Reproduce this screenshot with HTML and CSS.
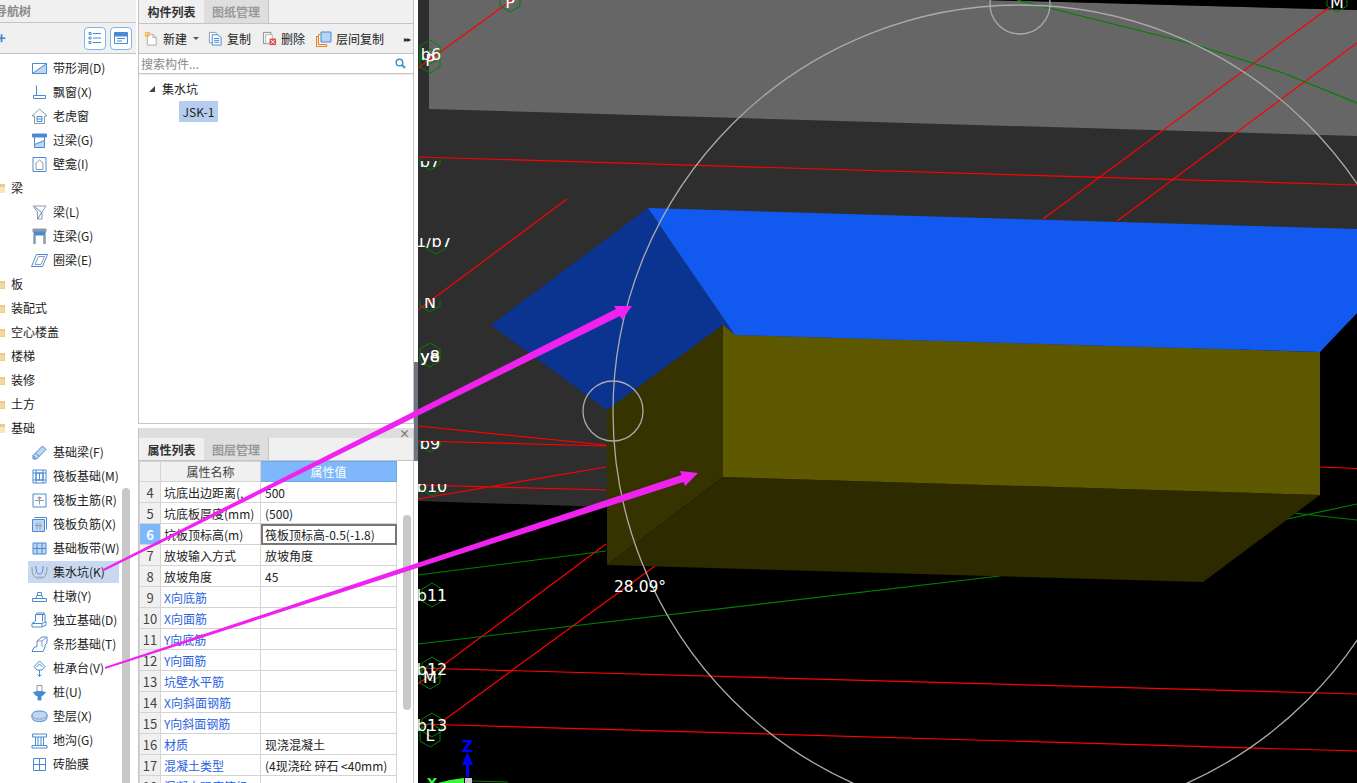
FILE: index.html
```html
<!DOCTYPE html>
<html lang="zh-CN">
<head>
<meta charset="utf-8">
<title>集水坑</title>
<link rel="stylesheet" href="styles.css">
</head>
<body>
<svg class="defs" width="0" height="0" aria-hidden="true">
  <symbol id="closed" viewBox="0 0 12 12"><path d="M0 2h5l1 1h6v8H0z" fill="#eecb85"/><path d="M1 5h10v5H1z" fill="#f3d89f"/></symbol>
  <symbol id="open" viewBox="0 0 12 12"><path d="M0 1h5l1 1h6v9H0z" fill="#eecb85"/><path d="M3 11l1-6h8v6z" fill="#f8e6bd"/></symbol>
</svg>

<aside class="nav">
  <div class="nav-title"><span class="nav-title-text">导航树</span></div>
  <div class="nav-tools">
    <span class="plus">+</span>
    <span class="tool-btn"><svg class="ic" viewBox="0 0 16 16"><path d="M2 2.500h2v2H2zM2 7h2v2H2zM2 11.500h2v2H2zM6 3.500h8M6 8h8M6 12.500h8"/></svg></span>
    <span class="tool-btn"><svg class="ic" viewBox="0 0 16 16"><path d="M1.500 2.500h13v11h-13z"/><path d="M1.500 3h13v3h-13z" class="solid"/><path d="M4 8.500h8M4 11h5"/></svg></span>
  </div>
  <div class="tree">
    <div class="leaf"><svg class="ic" viewBox="0 0 17 17"><path d="M1.500 3.500h14v10h-14z"/><path d="M1.500 13.500l14-10v10z" class="soft"/></svg><span>带形洞(D)</span></div>
    <div class="leaf"><svg class="ic" viewBox="0 0 17 17"><path d="M5.500 1.500v10h7M2.500 11.500h12v3h-12z"/></svg><span>飘窗(X)</span></div>
    <div class="leaf"><svg class="ic" viewBox="0 0 17 17"><path d="M8.500 1L1 8h2.500v7.500h10V8H16z" class="grey"/><path d="M6 8.500h5v5H6zM6 11h5"/></svg><span>老虎窗</span></div>
    <div class="leaf"><svg class="ic" viewBox="0 0 17 17"><path d="M1.500 2h14v3h-14z" class="solid"/><path d="M3.500 5v10.500h10V5"/><path d="M3.500 15.500v-3l10-4v7z" class="soft"/></svg><span>过梁(G)</span></div>
    <div class="leaf"><svg class="ic" viewBox="0 0 17 17"><path d="M2 1.500h13v14H2z"/><path d="M5 13.500V7l3.500-3L12 7v6.500z" class="grey"/></svg><span>壁龛(I)</span></div>
    <div class="branch"><svg class="fd"><use href="#open"/></svg><span>梁</span></div>
    <div class="leaf"><svg class="ic" viewBox="0 0 17 17"><path d="M2 2h13l-4 6v7H6.500V8z" class="grey"/><path d="M6.500 15l4.500-7M4 3l6 5"/></svg><span>梁(L)</span></div>
    <div class="leaf"><svg class="ic" viewBox="0 0 17 17"><path d="M2 1h13v3H2z" class="grey-solid"/><path d="M3 4h11v3H3z" class="solid"/><path d="M3.500 7v9M13.500 7v9" class="thick"/></svg><span>连梁(G)</span></div>
    <div class="leaf"><svg class="ic" viewBox="0 0 17 17"><path d="M5.500 2.500h11l-5 12H.5z"/><path d="M7.500 4.500h6l-3.500 8H4z" class="grey"/></svg><span>圈梁(E)</span></div>
    <div class="branch"><svg class="fd"><use href="#closed"/></svg><span>板</span></div>
    <div class="branch"><svg class="fd"><use href="#closed"/></svg><span>装配式</span></div>
    <div class="branch"><svg class="fd"><use href="#closed"/></svg><span>空心楼盖</span></div>
    <div class="branch"><svg class="fd"><use href="#closed"/></svg><span>楼梯</span></div>
    <div class="branch"><svg class="fd"><use href="#closed"/></svg><span>装修</span></div>
    <div class="branch"><svg class="fd"><use href="#closed"/></svg><span>土方</span></div>
    <div class="branch"><svg class="fd"><use href="#open"/></svg><span>基础</span></div>
    <div class="leaf"><svg class="ic" viewBox="0 0 17 17"><path d="M2 11.500L11.500 2l3.500 3.500L5.500 15H2z" class="soft"/><path d="M2 11.500L5.500 15M4.500 9l3.500 3.500"/></svg><span>基础梁(F)</span></div>
    <div class="leaf"><svg class="ic" viewBox="0 0 17 17"><path d="M2 2h13v13H2zM5 5h7v7H5zM2 5h13M2 12h13M5 2v13M12 2v13M8.500 5v7"/></svg><span>筏板基础(M)</span></div>
    <div class="leaf"><svg class="ic" viewBox="0 0 17 17"><path d="M2 2h13v13H2z"/><path d="M4 8.500h9M8.500 4.500v8M7 7V5.500h3V7" class="grey"/></svg><span>筏板主筋(R)</span></div>
    <div class="leaf"><svg class="ic" viewBox="0 0 17 17"><path d="M1.500 3.500h12v12h-12z" class="soft"/><path d="M3.500 1.500h12v12"/><path d="M4 9.500h7M6 6.500v7M9 6.500v7" class="grey"/></svg><span>筏板负筋(X)</span></div>
    <div class="leaf"><svg class="ic" viewBox="0 0 17 17"><path d="M2 3h13v11H2z" class="soft"/><path d="M6 3v11M11 3v11M2 8.500h13"/></svg><span>基础板带(W)</span></div>
    <div class="leaf sel"><svg class="ic" viewBox="0 0 17 17"><path d="M1 3c0 9 2 11 7.500 11S16 12 16 3" class="grey"/><path d="M5 2c0 6 1 8 3.500 8S12 8 12 2M4 9l.6.600M7 12l.6.600M10 12l.6.600M13 9l.6.600"/></svg><span>集水坑(K)</span></div>
    <div class="leaf"><svg class="ic" viewBox="0 0 17 17"><path d="M1.500 10.500h14v3h-14zM5 10.500l1-3h5l1 3M6.500 7.500v-3h4v3"/></svg><span>柱墩(Y)</span></div>
    <div class="leaf"><svg class="ic" viewBox="0 0 17 17"><path d="M1 11.500h10l4-2v3.500l-4 2H1zM1 11.500l3-2M11 11.500v3.500M4.500 9.500V2.500h7l2.500 0v7"/><path d="M4.500 2.500l2-1.500h7l-2 1.500v7"/></svg><span>独立基础(D)</span></div>
    <div class="leaf"><svg class="ic" viewBox="0 0 17 17"><path d="M1 15.500l2-4 3-1V5l5-4h5v6l-2 2v2l-2 4.500z"/><path d="M6 5h5l5-4M11 5v6" class="grey"/></svg><span>条形基础(T)</span></div>
    <div class="leaf"><svg class="ic" viewBox="0 0 17 17"><path d="M8.500 1L3 6.500l3 3.500h5l3-3.500z"/><path d="M8.500 4l-3 3M8.500 4l3 3M8.500 10v6.500M6.500 14.500l2 2 2-2"/></svg><span>桩承台(V)</span></div>
    <div class="leaf"><svg class="ic" viewBox="0 0 17 17"><path d="M6 1.500h5v6H6z" class="grey"/><path d="M2.500 8.500l4-1h4l4 1-3 3h-1.500v4.500h-3v-4.500H5z" class="solid"/></svg><span>桩(U)</span></div>
    <div class="leaf"><svg class="ic" viewBox="0 0 17 17"><path d="M1 7c0-2.500 3-4 7.500-4S16 4.500 16 7v2.500c0 2.500-3 4-7.500 4S1 12 1 9.500z" class="soft"/><path d="M1 7c0 2.500 3 4 7.500 4S16 9.500 16 7" class="grey"/></svg><span>垫层(X)</span></div>
    <div class="leaf"><svg class="ic" viewBox="0 0 17 17"><path d="M1.500 2h14v3h-14zM4.500 5v8M12.500 5v8M1 13.500h15v2.500H1zM7 5v8M10 5v8"/></svg><span>地沟(G)</span></div>
    <div class="leaf"><svg class="ic" viewBox="0 0 17 17"><path d="M2.500 2.500h12v12h-12zM8.500 2.500v12M2.500 8.500h12"/></svg><span>砖胎膜</span></div>
    <div class="branch"><svg class="fd"><use href="#closed"/></svg><span></span></div>
  </div>
  <div class="nav-scroll"></div>
</aside>

<main class="mid">
  <section class="list-panel">
    <div class="tabs">
      <span class="tab on">构件列表</span><span class="tab">图纸管理</span>
    </div>
    <div class="toolbar">
      <span class="tb-item tb-new"><svg class="tb-ic" viewBox="0 0 16 16"><path d="M3.500 3.500h6l3.500 3.500v8H3.500z" fill="#fff" stroke="#a8a8a8"/><path d="M9.500 3.500V7H13" fill="none" stroke="#a8a8a8"/><path d="M1 1h5v5H1z" fill="#f6a94a"/><path d="M3 1v5M1 3h5" stroke="#fbe08a"/></svg><span>新建</span><i class="caret"></i></span>
      <span class="tb-item tb-copy"><svg class="tb-ic" viewBox="0 0 16 16"><path d="M1.500 1.500h7l1 1v10h-8z" fill="#fff" stroke="#8a97a8"/><path d="M4.500 4h6l3.500 3v8h-9.500z" fill="#fff" stroke="#3d86d0"/><path d="M6.500 8h5.500M6.500 10h5.500M6.500 12h5.500" stroke="#3d86d0"/></svg><span>复制</span></span>
      <span class="tb-item tb-del"><svg class="tb-ic" viewBox="0 0 16 16"><path d="M1.500 1.500h8v12h-8z" fill="none" stroke="#8b8b8b"/><path d="M4 4h7v9H4z" fill="#fff" stroke="#b5b5b5"/><path d="M8 8h7v7H8z" fill="#d9534f"/><path d="M9.500 9.500l4 4M13.500 9.500l-4 4" stroke="#fff"/></svg><span>删除</span></span>
      <span class="tb-item tb-layer"><svg class="tb-ic wide" viewBox="0 0 16 16"><path d="M.5 15.500v-10h2M.5 15.500h10v-2" fill="none" stroke="#e8832a" stroke-width="1.200"/><path d="M2.500 13.500v-10h2M2.500 13.500h8" fill="none" stroke="#e8832a"/><path d="M5 1h10v10H5z" fill="#b5d3f5" stroke="#4a8ad4"/></svg><span>层间复制</span></span>
      <span class="more">▸▸</span>
    </div>
    <div class="search">
      <span class="search-text">搜索构件...</span>
      <svg class="search-ic" viewBox="0 0 11 11"><circle cx="4.500" cy="4.500" r="3.300" fill="none" stroke="#3d94d0" stroke-width="1.500"/><path d="M7 7l3 3" stroke="#3d94d0" stroke-width="2"/></svg>
    </div>
    <div class="comp-tree">
      <div class="comp-root"><i class="expander"></i><span>集水坑</span></div>
      <div class="comp-child"><span class="comp-sel">JSK-1</span></div>
    </div>
  </section>

  <section class="prop-panel">
    <div class="prop-strip"><span class="close">×</span></div>
    <div class="tabs">
      <span class="tab on">属性列表</span><span class="tab">图层管理</span>
    </div>
    <div class="prop-body">
      <table class="props">
        <colgroup><col class="c-no"><col class="c-name"><col class="c-val"></colgroup>
        <thead><tr><th class="no"></th><th>属性名称</th><th class="val-head">属性值</th></tr></thead>
        <tbody>
          <tr><td class="no">4</td><td>坑底出边距离(,</td><td>500</td></tr>
          <tr><td class="no">5</td><td>坑底板厚度(mm)</td><td>(500)</td></tr>
          <tr><td class="no cur">6</td><td>坑板顶标高(m)</td><td class="focus">筏板顶标高-0.5(-1.8)</td></tr>
          <tr><td class="no">7</td><td>放坡输入方式</td><td>放坡角度</td></tr>
          <tr><td class="no">8</td><td>放坡角度</td><td>45</td></tr>
          <tr><td class="no">9</td><td class="link">X向底筋</td><td></td></tr>
          <tr><td class="no">10</td><td class="link">X向面筋</td><td></td></tr>
          <tr><td class="no">11</td><td class="link">Y向底筋</td><td></td></tr>
          <tr><td class="no">12</td><td class="link">Y向面筋</td><td></td></tr>
          <tr><td class="no">13</td><td class="link">坑壁水平筋</td><td></td></tr>
          <tr><td class="no">14</td><td class="link">X向斜面钢筋</td><td></td></tr>
          <tr><td class="no">15</td><td class="link">Y向斜面钢筋</td><td></td></tr>
          <tr><td class="no">16</td><td class="link">材质</td><td>现浇混凝土</td></tr>
          <tr><td class="no">17</td><td class="link">混凝土类型</td><td>(4现浇砼 碎石 &lt;40mm)</td></tr>
          <tr><td class="no">18</td><td class="link">混凝土强度等级</td><td></td></tr>
        </tbody>
      </table>
      <div class="prop-track"><div class="prop-thumb"></div></div>
    </div>
  </section>
</main>

<div class="splitter"><div class="splitter-mark"></div></div>

<svg class="view" viewBox="418 0 939 783" aria-label="三维视图">
  <defs>
    <polygon id="hex" points="0,-12 10,-6 10,6 0,12 -10,6 -10,-6" fill="none" stroke="#008000"/>
    <polyline id="hexlow" points="-10,1 -10,6 0,12 10,6 10,1" fill="none" stroke="#008000"/>
    <clipPath id="c7"><rect x="418" y="161" width="40" height="20"/></clipPath>
    <clipPath id="c1b7"><rect x="418" y="238" width="50" height="20"/></clipPath>
    <clipPath id="cn"><rect x="418" y="298" width="40" height="20"/></clipPath>
    <clipPath id="c9"><rect x="418" y="441" width="40" height="20"/></clipPath>
    <clipPath id="c10"><rect x="418" y="484" width="50" height="20"/></clipPath>
  </defs>
  <rect x="418" y="0" width="939" height="783" fill="#000"/>
  <polygon points="418,0 1357,0 1357,320 606,507 418,501" fill="#2e2e2e"/>
  <polygon points="429,0 985,0 1357,10 1357,136 429,109" fill="#666"/>
  <polygon points="985,0 1357,10 1357,0" fill="#000"/>
  <polygon points="1320,352 1357,313 1357,620 1320,620" fill="#000"/>

  <g fill="none" stroke="#f00" stroke-width="1.200">
    <path d="M418 157L1357 185"/>
    <path d="M418 68L512 0"/>
    <path d="M418 310L567 199"/>
    <path d="M1043 219L1330 7"/>
    <path d="M1117 221L1357 43"/>
    <path d="M418 426L606 445M418 441L606 446M418 499L606 467M418 485L606 490"/>
    <path d="M418 684L606 544"/>
    <path d="M440 723L655 566"/>
    <path d="M418 668L1357 694"/>
    <path d="M418 724L1357 751"/>
    <path d="M1320 467L1357 468.500"/>
  </g>
  <g fill="none" stroke="#008000" stroke-width="1.200">
    <path d="M1017 0L1193 44L1283 73L1357 103"/>
    <path d="M418 575L606 551"/>
    <path d="M418 644L1000 576"/>
    <path d="M1287 519L1357 504M1293 513L1357 520"/>
    <path d="M472 781L508 782"/>
  </g>

  <polygon points="648,208 735,335 723,325 607,410 491,325" fill="#0b3390"/>
  <polygon points="607,410 723,325 723,477 607,565" fill="#373300"/>
  <polygon points="723,477 1320,495 1203,582 607,565" fill="#2e2a00"/>
  <polygon points="723,325 735,335 1320,352 1320,495 723,477" fill="#5e5900"/>
  <polygon points="648,208 1357,229 1357,313 1320,352 735,335" fill="#1259f0"/>

  <g fill="none" stroke="#ababab" stroke-width="1.300">
    <circle cx="1020" cy="412" r="407"/>
    <circle cx="1020" cy="4" r="30"/>
    <circle cx="613" cy="411" r="30"/>
  </g>

  <use href="#hex" x="510" y="0"/>
  <use href="#hex" x="430" y="52"/>
  <use href="#hex" x="430" y="61"/>
  <use href="#hexlow" x="430" y="158"/>
  <use href="#hexlow" x="436" y="242"/>
  <use href="#hexlow" x="430" y="300"/>
  <use href="#hex" x="430" y="355"/>
  <use href="#hexlow" x="430" y="440"/>
  <use href="#hexlow" x="432" y="484"/>
  <use href="#hex" x="432" y="595"/>
  <use href="#hex" x="432" y="669"/>
  <use href="#hex" x="430" y="677"/>
  <use href="#hex" x="432" y="725"/>
  <use href="#hex" x="430" y="735"/>
  <use href="#hex" x="1337" y="0"/>

  <g class="grid-labels">
    <text x="510" y="8" text-anchor="middle">P</text>
    <text x="431" y="60" text-anchor="middle">b6</text>
    <text x="430" y="66" text-anchor="middle">P</text>
    <text x="430" y="167" text-anchor="middle" clip-path="url(#c7)">b7</text>
    <text x="434" y="247" text-anchor="middle" clip-path="url(#c1b7)">1/b7</text>
    <text x="430" y="308" text-anchor="middle" clip-path="url(#cn)">N</text>
    <text x="430" y="362" text-anchor="middle">y8</text>
    <text x="430" y="362" text-anchor="middle">ye</text>
    <text x="430" y="449" text-anchor="middle" clip-path="url(#c9)">b9</text>
    <text x="432" y="492" text-anchor="middle" clip-path="url(#c10)">b10</text>
    <text x="432" y="601" text-anchor="middle">b11</text>
    <text x="432" y="675" text-anchor="middle">b12</text>
    <text x="430" y="683" text-anchor="middle">M</text>
    <text x="432" y="731" text-anchor="middle">b13</text>
    <text x="430" y="741" text-anchor="middle">L</text>
    <text x="1337" y="8" text-anchor="middle">M</text>
    <text x="614" y="592" class="angle">28.09°</text>
  </g>

  <path d="M467.500 777V756" stroke="#00f" stroke-width="3" fill="none"/>
  <polygon points="467.500,752 473,765 462,765" fill="#00f"/>
  <text x="467.500" y="752" class="axis-z" text-anchor="middle">Z</text>
  <polygon points="464,778 464,783 438,783 450,780" fill="#3f3"/>
  <rect x="465" y="778" width="7" height="5" fill="#ccc"/>
  <text x="432" y="787" class="axis-y" text-anchor="middle">Y</text>
</svg>

<svg class="arrows" viewBox="0 0 1357 783" aria-hidden="true">
  <polygon points="103,569 616,309 614,306 632,306 622,320 620,316 104,571" fill="#f022f0"/>
  <polygon points="105,667 681.500,475 680,471 698,473 685,486 683.500,482 105,669" fill="#f022f0"/>
</svg>
</body>
</html>
```
FILE: styles.css
```css
* { box-sizing: border-box; }
html, body { height: 100%; }
body {
  margin: 0;
  width: 1357px;
  height: 783px;
  overflow: hidden;
  display: flex;
  position: relative;
  background: #fff;
  color: #222;
  font: 12px/16px "Noto Sans CJK SC", "Noto Sans", sans-serif;
}
.defs { position: absolute; }

/* navigation tree */
.nav { width: 136px; flex: none; position: relative; overflow: hidden; height: 783px; }
.nav-title {
  height: 23px;
  background: #f0f0f0;
  border-bottom: 1px solid #c4c4c4;
  display: flex;
  align-items: center;
}
.nav-title-text { margin-left: -5px; color: #8a8a8a; font-weight: 700; white-space: nowrap; }
.nav-tools {
  height: 31px;
  background: #f0f0f0;
  border-bottom: 1px solid #c4c4c4;
  display: flex;
  align-items: center;
  padding-right: 4px;
  gap: 4px;
}
.plus { margin-left: -3px; margin-right: auto; color: #3d86d0; font-weight: 700; font-size: 15px; }
.tool-btn {
  width: 22px;
  height: 23px;
  border: 1px solid #7db4f2;
  border-radius: 4px;
  background: #fff;
  display: flex;
  align-items: center;
  justify-content: center;
}
.ic { width: 17px; height: 17px; flex: none; fill: none; stroke: #4a8ad4; stroke-width: 1; }
.tool-btn .ic { width: 16px; height: 16px; }
.ic .soft { fill: #bcd6f3; }
.ic .solid { fill: #4a8ad4; }
.ic .grey { stroke: #8d9aa8; }
.ic .grey-solid { fill: #8d9aa8; stroke: #8d9aa8; }
.ic .thick { stroke: #8d9aa8; stroke-width: 2.500; }
.tree { padding-top: 2px; }
.leaf, .branch { height: 24px; display: flex; align-items: center; white-space: nowrap; }
.leaf {
  margin-left: 28px;
  width: 91px;
  padding-left: 3px;
  gap: 5px;
  overflow: hidden;
  border-top: 1px solid transparent;
  border-bottom: 1px solid transparent;
  background-clip: padding-box;
}
.leaf.sel { background-color: #c8d8f0; }
.branch { gap: 6px; }
.fd { width: 12px; height: 12px; margin-left: -7px; flex: none; }
.nav-scroll {
  position: absolute;
  left: 122px;
  top: 488px;
  width: 8px;
  height: 300px;
  background: #c8c8c8;
  border-radius: 4px 4px 0 0;
}

/* middle column */
.mid { width: 276px; margin-left: 2px; flex: none; height: 783px; display: flex; flex-direction: column; }
.list-panel {
  height: 424px;
  flex: none;
  display: flex;
  flex-direction: column;
  border: 1px solid #c4c4c4;
  border-top: 0;
}
.tabs {
  height: 24px;
  flex: none;
  display: flex;
  background: #f0f0f0;
  border-bottom: 1px solid #c4c4c4;
}
.tab {
  width: 65px;
  text-align: center;
  line-height: 24px;
  font-weight: 700;
  color: #999;
  background: #dedede;
  border-right: 1px solid #c4c4c4;
}
.tab.on { color: #333; background: #f0f0f0; border-right: 0; }
.toolbar {
  height: 30px;
  flex: none;
  display: flex;
  align-items: center;
  background: #f0f0f0;
  border-bottom: 1px solid #c4c4c4;
  padding-left: 5px;
}
.tb-item { display: flex; align-items: center; white-space: nowrap; gap: 4px; }
.tb-ic { width: 15px; height: 15px; flex: none; }
.tb-copy { margin-left: 9px; }
.tb-del { margin-left: 11px; }
.tb-layer { margin-left: 11px; }
.tb-ic.wide { width: 16px; height: 16px; }
.caret {
  width: 0;
  height: 0;
  margin-left: 2px;
  border: 3px solid transparent;
  border-top: 3px solid #555;
  border-bottom: 0;
}
.more { margin-left: auto; margin-right: 3px; font-size: 8px; letter-spacing: -1px; color: #222; }
.search {
  height: 20px;
  flex: none;
  display: flex;
  align-items: center;
  justify-content: space-between;
  padding: 0 7px 0 2px;
  background: #fff;
  border-bottom: 1px solid #c4c4c4;
}
.search-text { color: #8a8a8a; }
.search-ic { width: 11px; height: 11px; }
.comp-tree { flex: 1; background: #fff; padding-top: 5px; border-top: 1px solid #efefef; }
.comp-root { height: 18px; display: flex; align-items: center; padding-left: 10px; gap: 7px; }
.expander {
  width: 0;
  height: 0;
  border-style: solid;
  border-width: 0 0 6px 6px;
  border-color: transparent transparent #444 transparent;
}
.comp-child { padding: 3px 0 0 40px; }
.comp-sel { display: inline-block; width: 39px; height: 21px; line-height: 21px; text-align: center; background: #b5cdee; }

/* property panel */
.prop-panel { margin-top: 4px; flex: 1; min-height: 0; display: flex; flex-direction: column; border: 1px solid #c4c4c4; border-top: 0; border-bottom: 0; overflow: hidden; }
.prop-strip { height: 10px; flex: none; background: #dedede; display: flex; justify-content: flex-end; align-items: center; padding-right: 3px; }
.close { color: #777; font-size: 11px; line-height: 10px; font-weight: 700; }
.prop-panel .tabs { height: 23px; }
.prop-panel .tab { line-height: 23px; }
.prop-body { display: flex; align-items: flex-start; flex: 1; min-height: 0; overflow: hidden; }
.props { width: 257px; border-collapse: collapse; table-layout: fixed; flex: none; }
.c-no { width: 21px; }
.c-name { width: 100px; }
.c-val { width: 136px; }
.props th, .props td {
  height: 21px;
  padding: 0 0 0 3px;
  border: 1px solid #d4d4d4;
  font-weight: 400;
  white-space: nowrap;
  overflow: hidden;
  line-height: 19px;
}
.props td:last-child { padding-left: 4px; }
.props thead th { height: 20px; background: #f0f0f0; text-align: center; color: #444; padding: 0; }
.props .val-head { background: #7eb8fa; color: #fff; border-color: #6ea8ea; }
.props .no { background: #f0f0f0; text-align: center; padding: 0; color: #444; font-size: 13px; }
.props .no.cur { background: #7eb8fa; color: #fff; font-weight: 700; }
.props .focus { outline: 2px solid #777; outline-offset: -2px; }
.props .link { color: #2a62e0; }
.prop-track { margin-left: 6px; width: 8px; flex: none; }
.prop-thumb { margin-top: 54px; height: 195px; background: #c8c8c8; border-radius: 4px; }

/* splitter and 3D view */
.splitter { width: 4px; flex: none; }
.splitter-mark { margin-top: 362px; height: 99px; background: #6d7580; }
.view { width: 939px; height: 783px; flex: none; display: block; }
.grid-labels text { fill: #fff; font: 16px "DejaVu Sans", sans-serif; }
.grid-labels .angle { font-size: 15.500px; }
.axis-z { fill: #00f; font: 700 15px "DejaVu Sans", sans-serif; }
.axis-y { fill: #3f3; font: 700 13px "DejaVu Sans", sans-serif; }

/* callout arrows lie over every panel */
.arrows { position: absolute; left: 0; top: 0; width: 1357px; height: 783px; pointer-events: none; }
```
